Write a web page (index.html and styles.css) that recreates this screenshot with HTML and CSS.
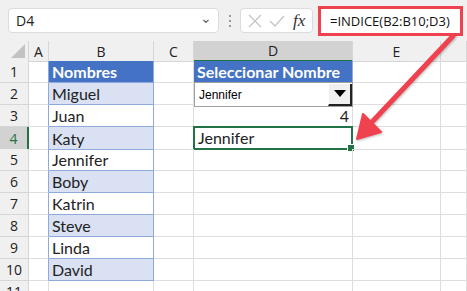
FILE: index.html
```html
<!DOCTYPE html>
<html>
<head>
<meta charset="utf-8" />
<title>INDICE</title>
<link rel="stylesheet" href="styles.css">
</head>
<body>
<div class="bar">
    <div class="namebox"><span>D4</span><span class="chev">&#8964;</span></div>
    <div class="dots"><i></i><i></i><i></i></div>
    <div class="fxbox">
        <svg width="16" height="16" viewBox="0 0 16 16"><path d="M2 2L14 14M14 2L2 14" stroke="#c4c4c4" stroke-width="1.3" fill="none"/></svg>
        <svg width="18" height="16" viewBox="0 0 18 16"><path d="M2 8L7 13L16 3" stroke="#c4c4c4" stroke-width="1.3" fill="none"/></svg>
        <span class="fx">fx</span>
    </div>
    <div class="formula"><span>=INDICE(B2:B10;D3)</span></div>
</div>

<div class="sheet">
    <div class="row head">
        <div class="c corner"><span class="tri"></span></div>
        <div class="c">A</div>
        <div class="c">B</div>
        <div class="c">C</div>
        <div class="c sel">D</div>
        <div class="c">E</div>
        <div class="c"></div>
    </div>
    <div class="row">
        <div class="c num">1</div>
        <div class="c edge"></div>
        <div class="c th">Nombres</div>
        <div class="c"></div>
        <div class="c th">Seleccionar Nombre</div>
        <div class="c"></div>
        <div class="c"></div>
    </div>
    <div class="row">
        <div class="c num">2</div>
        <div class="c edge"></div>
        <div class="c td band">Miguel</div>
        <div class="c"></div>
        <div class="c drop">
            <div class="combo"><span>Jennifer</span><span class="btn"><svg width="12" height="7" viewBox="0 0 12 7"><path d="M0 0H12L6 7Z" fill="#000"/></svg></span></div>
        </div>
        <div class="c"></div>
        <div class="c"></div>
    </div>
    <div class="row">
        <div class="c num">3</div>
        <div class="c edge"></div>
        <div class="c td">Juan</div>
        <div class="c"></div>
        <div class="c val">4</div>
        <div class="c"></div>
        <div class="c"></div>
    </div>
    <div class="row">
        <div class="c num cur">4</div>
        <div class="c edge"></div>
        <div class="c td band">Katy</div>
        <div class="c"></div>
        <div class="c val-l active">Jennifer<span class="handle"></span></div>
        <div class="c"></div>
        <div class="c"></div>
    </div>
    <div class="row">
        <div class="c num">5</div>
        <div class="c edge"></div>
        <div class="c td">Jennifer</div>
        <div class="c"></div>
        <div class="c"></div>
        <div class="c"></div>
        <div class="c"></div>
    </div>
    <div class="row">
        <div class="c num">6</div>
        <div class="c edge"></div>
        <div class="c td band">Boby</div>
        <div class="c"></div>
        <div class="c"></div>
        <div class="c"></div>
        <div class="c"></div>
    </div>
    <div class="row">
        <div class="c num">7</div>
        <div class="c edge"></div>
        <div class="c td">Katrin</div>
        <div class="c"></div>
        <div class="c"></div>
        <div class="c"></div>
        <div class="c"></div>
    </div>
    <div class="row">
        <div class="c num">8</div>
        <div class="c edge"></div>
        <div class="c td band">Steve</div>
        <div class="c"></div>
        <div class="c"></div>
        <div class="c"></div>
        <div class="c"></div>
    </div>
    <div class="row">
        <div class="c num">9</div>
        <div class="c edge"></div>
        <div class="c td">Linda</div>
        <div class="c"></div>
        <div class="c"></div>
        <div class="c"></div>
        <div class="c"></div>
    </div>
    <div class="row">
        <div class="c num">10</div>
        <div class="c edge"></div>
        <div class="c td band">David</div>
        <div class="c"></div>
        <div class="c"></div>
        <div class="c"></div>
        <div class="c"></div>
    </div>
    <div class="row">
        <div class="c num">11</div>
        <div class="c"></div>
        <div class="c"></div>
        <div class="c"></div>
        <div class="c"></div>
        <div class="c"></div>
        <div class="c"></div>
    </div>
</div>

<!-- flecha roja de la captura -->
<svg class="arrow" width="467" height="291" viewBox="0 0 467 291">
    <line x1="453" y1="36" x2="371" y2="123" stroke="#f0424e" stroke-width="5" stroke-linecap="round"/>
    <path d="M357 139L363 114L381 132Z" fill="#f0424e" stroke="#f0424e" stroke-width="2" stroke-linejoin="round"/>
</svg>
</body>
</html>
```

FILE: styles.css
```css
body {
    margin:0;
    width:467px;
    height:291px;
    overflow:hidden;
    background:#fff;
    font-family:"Open Sans", "Noto Sans", sans-serif;
    color:#222;
    position:relative;
}
/* barra de nombre y formula */
.bar {
    height:41px;
    background:#f0f0f0;
    display:flex;
    align-items:center;
    box-sizing:border-box;
    padding:0 4px 0 8px;
}
.namebox {
    width:211px;
    height:25px;
    box-sizing:border-box;
    background:#fff;
    border:1px solid #dcdcdc;
    border-radius:4px;
    display:flex;
    align-items:center;
    justify-content:space-between;
    padding:0 6px 0 7px;
    font-size:14px;
}
.chev {
    color:#666;
    font-size:14px;
    line-height:10px;
    margin-top:-6px;
}
.dots {
    width:21px;
    display:flex;
    flex-direction:column;
    align-items:center;
    gap:3px;
}
.dots i {
    width:2px;
    height:2px;
    background:#999;
}
.fxbox {
    width:73px;
    height:25px;
    box-sizing:border-box;
    background:#fff;
    border:1px solid #dcdcdc;
    border-radius:4px;
    display:flex;
    align-items:center;
    gap:5px;
    padding:0 4px 0 6px;
}
.fx {
    font-family:"Liberation Serif", serif;
    font-style:italic;
    font-size:17px;
    color:#333;
    margin-left:2px;
}
.formula {
    margin-left:5px;
    width:145px;
    height:30px;
    box-sizing:border-box;
    border:3px solid #f0424e;
    background:#fff;
    display:flex;
    align-items:center;
    padding-left:9px;
    font-size:13px;
    color:#111;
    white-space:nowrap;
}
/* hoja */
.row {
    display:grid;
    grid-template-columns:29px 20px 105px 40px 159px 88px 1fr;
    height:22px;
}
.row.head {
    height:20px;
    background:#f0f0f0;
}
.c {
    box-sizing:border-box;
    border-right:1px solid #dedede;
    border-bottom:1px solid #dedede;
    font-family:"Lato", "Liberation Sans", sans-serif;
    font-size:16px;
    display:flex;
    align-items:flex-end;
    padding:0 3px 1px;
    white-space:nowrap;
    position:relative;
}
.head .c {
    font-family:"Open Sans", sans-serif;
    font-size:14px;
    justify-content:center;
    align-items:center;
    padding:0;
    border-color:#d6d6d6;
    color:#222;
}
.head .sel {
    background:#d2d2d2;
    border-bottom:2px solid #217346;
}
.corner {
    justify-content:flex-end !important;
    align-items:flex-end !important;
}
.tri {
    width:0;
    height:0;
    border-left:14px solid transparent;
    border-bottom:14px solid #c2c2c2;
    margin:0 3px 3px 0;
}
.num {
    background:#f0f0f0;
    border-color:#d6d6d6;
    font-family:"Open Sans", sans-serif;
    font-size:14px;
    justify-content:center;
    align-items:center;
    padding:0;
}
.num.cur {
    background:#d2d2d2;
    color:#217346;
    border-right:2px solid #217346;
}
.edge {
    border-right-color:#8ea9db;
}
.th {
    background:#4472c4;
    color:#fff;
    font-weight:bold;
    border-right-color:#8ea9db;
    border-bottom-color:#8ea9db;
}
.td {
    border-right-color:#8ea9db;
    border-bottom-color:#8ea9db;
}
.band {
    background:#d9e1f2;
}
.val {
    justify-content:flex-end;
}
.active {
    border:2px solid #217346;
    margin:-1px 0 0 -1px;
    padding-left:3px;
}
.handle {
    position:absolute;
    right:-4px;
    bottom:-4px;
    width:6px;
    height:6px;
    background:#217346;
    border:1px solid #fff;
}
/* lista desplegable */
.combo {
    position:absolute;
    left:0;
    top:-1px;
    width:159px;
    height:25px;
    box-sizing:border-box;
    background:#fff;
    border:1px solid #a0a0a0;
    display:flex;
    align-items:center;
    justify-content:space-between;
    font-family:"Liberation Sans", sans-serif;
    font-size:12px;
    color:#000;
    padding-left:4px;
    z-index:2;
}
.btn {
    width:24px;
    height:22px;
    box-sizing:border-box;
    background:#f0f0f0;
    border-right:2px solid #222;
    border-bottom:2px solid #222;
    border-left:1px solid #fff;
    display:flex;
    align-items:center;
    justify-content:center;
}
.arrow {
    position:absolute;
    left:0;
    top:0;
    z-index:5;
    filter:drop-shadow(1px 1px 1px rgba(0,0,0,0.25));
}
```
